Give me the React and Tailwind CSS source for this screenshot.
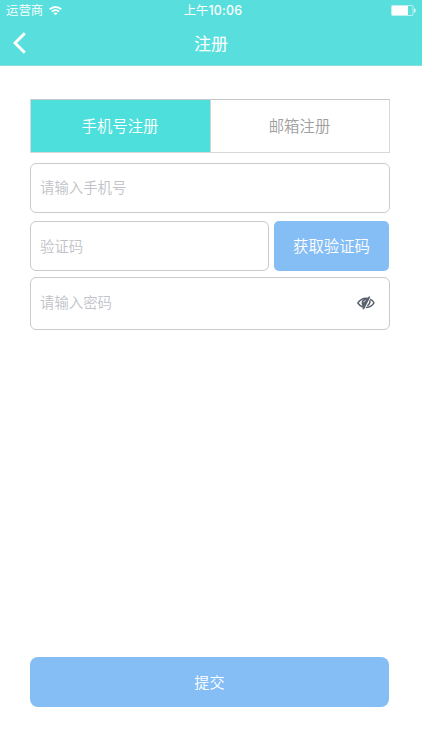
import React, { useState } from "react";

function StatusBar() {
  return (
    <div className="grid h-[21px] grid-cols-3 items-center pl-[6px] pr-[6px] text-[12.4px] leading-[21px]">
      <div className="flex items-center gap-[6px]">
        <span className="font-[350]">运营商</span>
        <svg width="13" height="10" viewBox="0 0 13 10" fill="none" stroke="white" strokeWidth="1.8">
          <path d="M0.7 3.4C4 .2 9 .2 12.3 3.4" />
          <path d="M2.9 5.7C5 3.7 8 3.7 10.1 5.7" />
          <path d="M6.5 9.3 4.4 7.3C5.6 6.2 7.4 6.2 8.6 7.3Z" fill="white" stroke="none" />
        </svg>
      </div>
      <div className="whitespace-nowrap pl-[4px] text-center">
        上午<span className="font-['Inter'] font-medium tracking-[0.25px]">10:06</span>
      </div>
      <div className="flex justify-end">
        <svg width="25" height="11" viewBox="0 0 25 11">
          <rect x="0.5" y="0.5" width="21.5" height="10" rx="0.8" fill="none" stroke="white" strokeOpacity="0.6" />
          <rect x="1" y="1" width="16" height="9" fill="white" />
          <path d="M23 3.5h.6q1 0 1 1v2q0 1-1 1H23Z" fill="white" fillOpacity="0.75" />
        </svg>
      </div>
    </div>
  );
}

function HiddenEye() {
  return (
    <svg width="18" height="14" viewBox="0 0 18 14" fill="none" stroke="#59616d" strokeWidth="1.4" strokeLinecap="round">
      <path d="M5.8 11C3.8 10.2 2 8.8 0.8 7 2.9 4 6 2.3 9.3 2.3q1 0 1.9.2" />
      <path d="M13.500 3.400C15 4.200 16.200 5.400 17 6.900 15.400 9.700 12.600 11.300 9.400 11.500" />
      <path d="M12.300 1.200 6.400 12.600" strokeWidth="1.7" />
      <path d="M11.300 2.400 6.800 11.300C4 9 3.800 5.300 6.200 3.200 7.700 2.400 9.500 2.200 11.300 2.400Z" fill="#59616d" stroke="none" />
      <path d="M6.600 5.900q.5-1.100 1.600-1.400" stroke="white" strokeWidth="0.8" />
      <path d="M13 4.800C13.100 6.900 12.300 8.500 10.700 9.500" />
    </svg>
  );
}

const field =
  "block rounded-[6px] border border-[#c9cacc] bg-white pl-[9px] text-[14.4px] font-[350] text-[#777] outline-none placeholder:text-[#c1c2c8] placeholder:opacity-100";

export default function App() {
  const [tab, setTab] = useState(0);
  return (
    <div className="flex h-[750px] w-[422px] flex-col bg-white font-['Noto_Sans_CJK_SC',sans-serif]">
      <header className="h-[66px] border-b border-[#8adedd] bg-[#58dedd] text-white">
        <StatusBar />
        <div className="grid h-[43px] grid-cols-[40px_1fr_40px] items-center">
          <button className="pl-[13px]" aria-label="返回">
            <svg width="14" height="22" viewBox="0 0 14 22" fill="none" stroke="white" strokeWidth="3">
              <path d="M11.800 1.200 2 11l9.800 9.800" />
            </svg>
          </button>
          <h1 className="text-center text-[17px] font-normal leading-[40px]">注册</h1>
        </div>
      </header>
      <main className="flex flex-1 flex-col pl-[30px] pr-[32px] pt-[33px]">
        <div className="flex h-[54px] w-[360px] border border-[#d8d8d8] border-t-[#c4c8c8] text-[15.4px] font-[350]">
          <button
            onClick={() => setTab(0)}
            className={`w-[180px] border-r border-[#d0d4d4] pr-[1px] ${tab === 0 ? "bg-[#4ddfdb] text-white" : "text-[#a0a0a0]"}`}
          >
            手机号注册
          </button>
          <button
            onClick={() => setTab(1)}
            className={`flex-1 pr-[1px] ${tab === 1 ? "bg-[#4ddfdb] text-white" : "text-[#a0a0a0]"}`}
          >
            邮箱注册
          </button>
        </div>
        <input className={`${field} mt-[10px] h-[50px] w-[360px] pb-[3px]`} placeholder="请输入手机号" />
        <div className="mt-[8px] flex h-[50px] w-[359px] gap-[5px]">
          <input className={`${field} h-[50px] w-[239px] pb-[2px]`} placeholder="验证码" />
          <button className="h-[50px] flex-1 rounded-[5px] bg-[#85bdf5] text-[15.4px] font-[350] text-white">
            获取验证码
          </button>
        </div>
        <div className="mt-[6px] flex h-[53px] w-[360px] items-center rounded-[6px] border border-[#c9cacc] pr-[14px]">
          <input
            type="password"
            className="min-w-0 flex-1 bg-transparent pb-[3px] pl-[9px] text-[14.4px] font-[350] outline-none placeholder:text-[#c1c2c8] placeholder:opacity-100"
            placeholder="请输入密码"
          />
          <button className="pb-[1px]" aria-label="显示密码">
            <HiddenEye />
          </button>
        </div>
        <button className="mb-[43px] mt-auto h-[50px] w-[359px] rounded-[8px] bg-[#85bdf5] pb-[2px] text-[15.2px] font-[350] text-white">
          提交
        </button>
      </main>
    </div>
  );
}
